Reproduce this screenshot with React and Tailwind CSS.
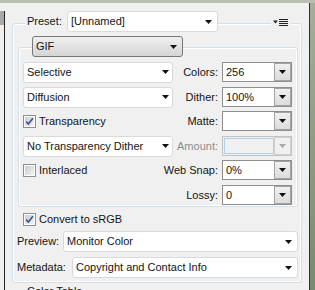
const Arrow = ({ color = "#111" }) => (
  <svg width="7" height="4" viewBox="0 0 7 4" className="shrink-0">
    <path d="M0 0h7L3.5 4z" fill={color} />
  </svg>
);

const FlatCombo = ({ value, className = "", pr = "pr-[3px]" }) => (
  <div
    className={`flex items-center justify-between h-[21px] bg-white border border-[#dadada] rounded-[3px] pl-[3px] ${pr} ${className}`}
  >
    <span className="whitespace-nowrap">{value}</span>
    <Arrow />
  </div>
);

const SpinCombo = ({ value, disabled }) => (
  <div
    className={`flex h-[20px] w-[70px] border ${
      disabled ? "border-[#c2c2c2] bg-[#f0f0f0]" : "border-[#8e8e8e] bg-white"
    }`}
  >
    <div
      className={`flex-1 flex items-center pl-[3px] ${
        disabled ? "border border-[#b6cfe9] m-[1px] mr-0 bg-[#f0f0f0]" : ""
      }`}
    >
      {value}
    </div>
    <div
      className={`w-[17px] flex items-center justify-center border ${
        disabled
          ? "border-[#d0d0d0] bg-[#f0f0f0]"
          : "border-[#a3a3a3] bg-gradient-to-b from-[#f0f0f0] to-[#dcdcdc]"
      }`}
    >
      <Arrow color={disabled ? "#a8a8a8" : "#111"} />
    </div>
  </div>
);

const Check = ({ checked }) => (
  <div className="w-[13px] h-[13px] shrink-0 border border-[#8e8f8f] bg-white p-[1px]">
    <div className="w-full h-full bg-gradient-to-br from-[#c9ccd1] to-[#f3f3f3] flex items-center justify-center">
      {checked && (
        <svg width="9" height="9" viewBox="0 0 9 9">
          <path
            d="M1.2 4.6l2.2 2.4L7.9 1.2"
            stroke="#3b5791"
            strokeWidth="1.7"
            fill="none"
          />
        </svg>
      )}
    </div>
  </div>
);

const MenuIcon = () => (
  <svg width="20" height="21" viewBox="0 0 20 21">
    <path d="M2 9.5h5l-2.5 3z" fill="#222" />
    <rect x="8" y="8" width="9" height="1" fill="#222" />
    <rect x="8" y="10" width="9" height="1" fill="#222" />
    <rect x="8" y="12" width="9" height="1" fill="#222" />
    <rect x="8" y="14" width="9" height="1" fill="#222" />
  </svg>
);

// label column is right aligned, long labels spill to the left
const Row = ({ left, label, value, disabled, gap = "" }) => (
  <div className={`flex items-center h-[20px] pl-[4px] ${gap}`}>
    <div className="w-[150px] shrink-0 flex items-center">{left}</div>
    <div
      className={`w-[45px] shrink-0 flex justify-end whitespace-nowrap ${
        disabled ? "text-[#8d8d8d]" : ""
      }`}
    >
      <span>{label}</span>
    </div>
    <div className="ml-[4px]">
      <SpinCombo value={value} disabled={disabled} />
    </div>
  </div>
);

const CheckLabel = ({ checked, children }) => (
  <div className="flex items-center gap-[3px]">
    <Check checked={checked} />
    <span className="whitespace-nowrap">{children}</span>
  </div>
);

export default function App() {
  return (
    <div className="w-[315px] h-[290px] overflow-hidden bg-[#f0f0f0] flex flex-col font-['Liberation_Sans',Arial,sans-serif] text-[11px] leading-[13px] text-[#141414]">
      <div className="h-[3px] shrink-0 bg-[#b9bfb3]" />
      <div className="flex flex-1 min-h-0">
        {/* left edge */}
        <div className="w-[5px] shrink-0 flex flex-col">
          <div className="h-[8px]" />
          <div className="flex-1 border-r border-[#262626]">
            <div className="h-[14px] bg-[#a9a9a9]" />
          </div>
        </div>

        {/* settings */}
        <div className="w-[304px] shrink-0 flex flex-col pt-[20px]">
          <div className="ml-[7px] w-[290px] border border-[#d5dfe5] rounded-[3px] shadow-[inset_0_0_0_1px_#fff] pb-[4px]">
            {/* preset header */}
            <div className="-mt-[13px] h-[21px] flex items-center">
              <span className="ml-[12px] w-[42px] h-full pl-[2px] bg-[#f0f0f0] flex items-center">
                Preset:
              </span>
              <FlatCombo value="[Unnamed]" className="w-[151px]" pr="pr-[5px]" />
              <div className="flex-1" />
              <span className="w-[20px] h-full bg-[#f0f0f0]">
                <MenuIcon />
              </span>
              <div className="w-[10px]" />
            </div>

            {/* format group */}
            <div className="mt-[15px] ml-[5px] w-[280px] border border-[#d5dfe5] rounded-[3px] shadow-[inset_0_0_0_1px_#fff] pb-[1px]">
              <div className="-mt-[12px] ml-[13px] w-[151px] h-[21px] flex items-center justify-between pl-[3px] pr-[5px] border border-[#777] rounded-[3px] bg-gradient-to-b from-[#f0f0f0] to-[#d5d5d5]">
                <span>GIF</span>
                <Arrow />
              </div>

              <div className="mt-[5px] flex flex-col">
                <Row
                  left={<FlatCombo value="Selective" className="w-[150px]" />}
                  label="Colors:"
                  value="256"
                />
                <Row
                  gap="mt-[5px]"
                  left={<FlatCombo value="Diffusion" className="w-[150px]" />}
                  label="Dither:"
                  value="100%"
                />
                <Row
                  gap="mt-[4px]"
                  left={<CheckLabel checked>Transparency</CheckLabel>}
                  label="Matte:"
                  value=""
                />
                <Row
                  gap="mt-[5px]"
                  left={
                    <FlatCombo
                      value="No Transparency Dither"
                      className="w-[150px]"
                    />
                  }
                  label="Amount:"
                  value=""
                  disabled
                />
                <Row
                  gap="mt-[4px]"
                  left={<CheckLabel>Interlaced</CheckLabel>}
                  label="Web Snap:"
                  value="0%"
                />
                <Row gap="mt-[5px]" left={null} label="Lossy:" value="0" />
              </div>
            </div>

            <div className="mt-[6px] ml-[10px] h-[13px] flex items-center">
              <CheckLabel checked>Convert to sRGB</CheckLabel>
            </div>

            <div className="mt-[5px] h-[21px] flex items-center pl-[4px] pr-[3px]">
              <span className="w-[46px] shrink-0">Preview:</span>
              <FlatCombo value="Monitor Color" className="flex-1" pr="pr-[5px]" />
            </div>
            <div className="mt-[5px] h-[21px] flex items-center pl-[4px] pr-[3px]">
              <span className="w-[55px] shrink-0">Metadata:</span>
              <FlatCombo
                value="Copyright and Contact Info"
                className="flex-1"
                pr="pr-[5px]"
              />
            </div>
          </div>

          <div className="mt-[2px] ml-[22px] whitespace-nowrap">Color Table</div>
        </div>

        {/* right edge */}
        <div className="w-[6px] shrink-0 border-l border-[#303030] bg-gradient-to-b from-[#a5ad9b] via-[#8f9c80] to-[#7a8a6c]" />
      </div>
    </div>
  );
}
